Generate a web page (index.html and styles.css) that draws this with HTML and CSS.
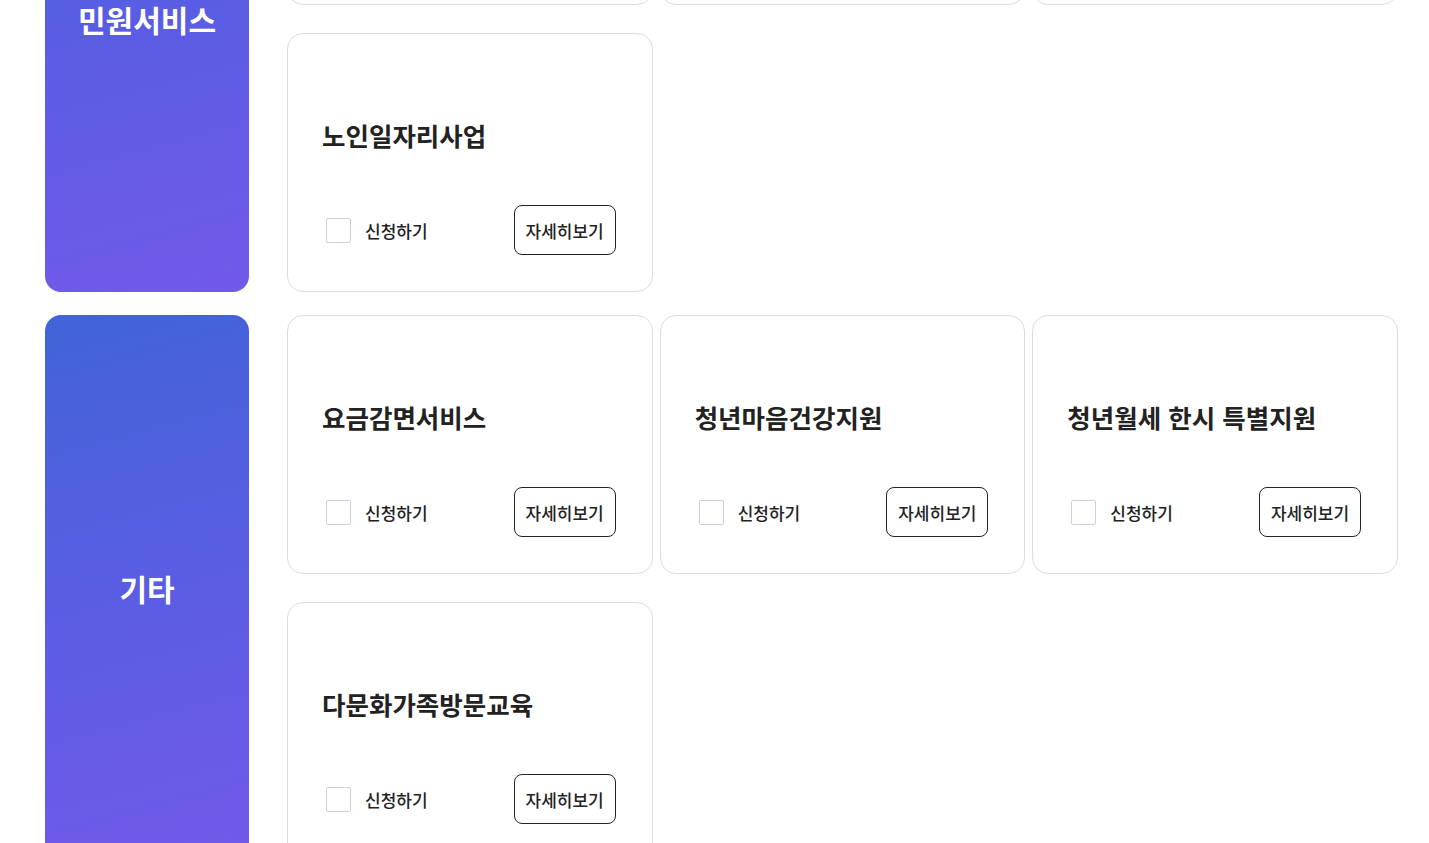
FILE: index.html
```html
<!DOCTYPE html>
<html lang="ko">
<head>
<meta charset="utf-8">
<title>서비스 목록</title>
<link rel="stylesheet" href="styles.css">
</head>
<body>
<main class="page">
  <section class="group">
    <div class="group-label">민원서비스</div>
    <div class="cards">
      <div class="card">
        <h3 class="card-title">전입신고</h3>
        <div class="card-foot">
          <label class="apply"><span class="box"></span>신청하기</label>
          <button class="detail">자세히보기</button>
        </div>
      </div>
      <div class="card">
        <h3 class="card-title">주민등록등본발급</h3>
        <div class="card-foot">
          <label class="apply"><span class="box"></span>신청하기</label>
          <button class="detail">자세히보기</button>
        </div>
      </div>
      <div class="card">
        <h3 class="card-title">기초연금신청</h3>
        <div class="card-foot">
          <label class="apply"><span class="box"></span>신청하기</label>
          <button class="detail">자세히보기</button>
        </div>
      </div>
      <div class="card">
        <h3 class="card-title">노인일자리사업</h3>
        <div class="card-foot">
          <label class="apply"><span class="box"></span>신청하기</label>
          <button class="detail">자세히보기</button>
        </div>
      </div>
    </div>
  </section>
  <section class="group">
    <div class="group-label">기타</div>
    <div class="cards">
      <div class="card">
        <h3 class="card-title">요금감면서비스</h3>
        <div class="card-foot">
          <label class="apply"><span class="box"></span>신청하기</label>
          <button class="detail">자세히보기</button>
        </div>
      </div>
      <div class="card">
        <h3 class="card-title">청년마음건강지원</h3>
        <div class="card-foot">
          <label class="apply"><span class="box"></span>신청하기</label>
          <button class="detail">자세히보기</button>
        </div>
      </div>
      <div class="card">
        <h3 class="card-title">청년월세 한시 특별지원</h3>
        <div class="card-foot">
          <label class="apply"><span class="box"></span>신청하기</label>
          <button class="detail">자세히보기</button>
        </div>
      </div>
      <div class="card">
        <h3 class="card-title">다문화가족방문교육</h3>
        <div class="card-foot">
          <label class="apply"><span class="box"></span>신청하기</label>
          <button class="detail">자세히보기</button>
        </div>
      </div>
    </div>
  </section>
</main>
</body>
</html>
```

FILE: styles.css
```css
html, body {
  margin: 0;
  padding: 0;
  background: #ffffff;
}

body {
  font-family: "Noto Sans CJK KR", "Noto Sans", sans-serif;
  color: #222222;
  overflow: hidden;
}

.page {
  margin-top: -254px;
  padding: 0 31px 40px 45px;
  display: flex;
  flex-direction: column;
  gap: 23px;
}

.group {
  display: flex;
  gap: 38px;
}

.group-label {
  flex: 0 0 204px;
  border-radius: 16px;
  background: linear-gradient(165deg, #4164d8 0%, #5a5de3 50%, #7159ea 100%);
  color: #ffffff;
  font-size: 30px;
  font-weight: 700;
  display: flex;
  align-items: center;
  justify-content: center;
}

.cards {
  flex: 1;
  display: grid;
  grid-template-columns: repeat(3, 1fr);
  column-gap: 7px;
  row-gap: 28px;
  align-content: start;
}

.card {
  border: 1px solid #dddddd;
  border-radius: 16px;
  background: #ffffff;
  padding: 83px 36px 36px 34px;
  display: flex;
  flex-direction: column;
  gap: 52px;
}

.card-title {
  margin: 0;
  font-size: 25.5px;
  line-height: 36px;
  font-weight: 700;
  color: #222222;
}

.card-foot {
  display: flex;
  align-items: center;
  justify-content: space-between;
  height: 50px;
}

.apply {
  display: flex;
  align-items: center;
  gap: 14px;
  padding-left: 4px;
  font-size: 17px;
  font-weight: 500;
  color: #222222;
}

.box {
  width: 23px;
  height: 23px;
  border: 1px solid #c9d0e2;
  border-radius: 2px;
  background: #ffffff;
}

.detail {
  height: 50px;
  width: 102px;
  padding: 0;
  border: 1px solid #222222;
  border-radius: 8px;
  background: #ffffff;
  font-family: inherit;
  font-size: 17px;
  font-weight: 500;
  color: #222222;
}
```
